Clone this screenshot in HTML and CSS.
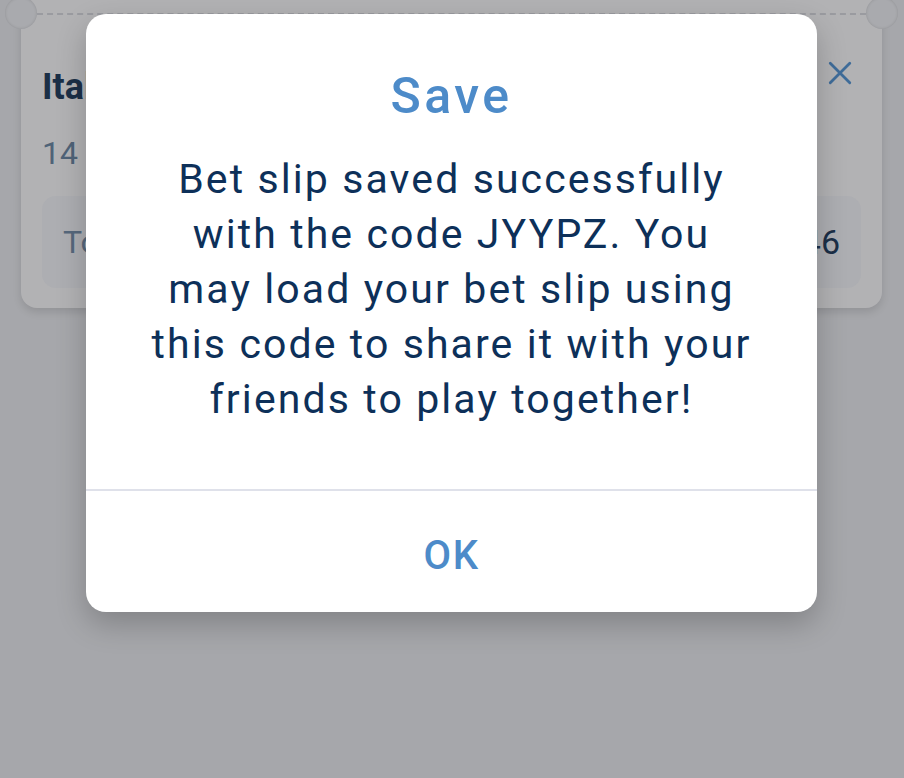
FILE: index.html
```html
<!DOCTYPE html>
<html lang="en">
<head>
<meta charset="utf-8">
<title>Save</title>
<link rel="stylesheet" href="styles.css">
</head>
<body>
<div class="page">
  <div class="ticket">
    <span class="notch notch-left"></span>
    <span class="notch notch-right"></span>
    <div class="ticket-head">
      <div class="match">Italy</div>
      <svg class="close" viewBox="0 0 24 24" width="30" height="30"><path d="M3 3 L21 21 M21 3 L3 21" stroke="currentColor" stroke-width="2.6" fill="none" stroke-linecap="round"/></svg>
    </div>
    <div class="date">14</div>
    <div class="total">
      <span class="total-label">Total</span>
      <span class="total-value">3.46</span>
    </div>
  </div>
</div>

<div class="modal">
  <div class="modal-body">
    <h1 class="modal-title">Save</h1>
    <p class="modal-text">Bet slip saved successfully<br>with the code JYYPZ. You<br>may load your bet slip using<br>this code to share it with your<br>friends to play together!</p>
  </div>
  <div class="modal-footer">
    <button class="ok">OK</button>
  </div>
</div>
</body>
</html>
```

FILE: styles.css
```css
html, body {
  margin: 0;
  height: 100%;
}
body {
  background: #a6a7ab;
  font-family: Roboto, "Noto Sans", sans-serif;
  overflow: hidden;
}
.page {
  padding: 0 22px 0 21px;
}
.ticket {
  position: relative;
  background: #b2b2b4;
  margin-top: -10px;
  border-radius: 0 0 16px 16px;
  box-shadow: 0 4px 8px rgba(0,0,0,0.12);
  padding: 0 21px 20px;
  box-sizing: border-box;
}
.ticket::before {
  content: "";
  position: absolute;
  left: 16px;
  right: 16px;
  top: 23px;
  border-top: 2px dashed #9a9ba0;
}
.notch {
  position: absolute;
  top: 7px;
  width: 32px;
  height: 32px;
  border-radius: 50%;
  background: #a9aaae;
  box-shadow: inset 0 0 3px rgba(0,0,0,0.15);
}
.notch-left { left: -16px; }
.notch-right { right: -16px; }
.ticket-head {
  display: flex;
  justify-content: space-between;
  align-items: flex-start;
  padding-top: 76px;
}
.match {
  font-size: 36px;
  line-height: 42px;
  font-weight: 700;
  color: #1b2f47;
}
.close {
  color: #3f6c99;
  margin-right: 8px;
  margin-top: -6px;
  width: 26px;
  height: 26px;
}
.date {
  margin-top: 26px;
  font-size: 32px;
  line-height: 38px;
  color: #4f6378;
}
.total {
  margin-top: 24px;
  height: 92px;
  border-radius: 14px;
  background: #adaeb2;
  display: flex;
  align-items: center;
  justify-content: space-between;
  padding: 0 21px;
}
.total-label {
  font-size: 32px;
  color: #56687c;
}
.total-value {
  font-size: 34px;
  color: #1b2f47;
}

.modal {
  position: absolute;
  left: 86px;
  top: 14px;
  width: 731px;
  height: 598px;
  background: #fff;
  border-radius: 20px;
  box-shadow: 0 12px 30px rgba(0,0,0,0.22);
  display: flex;
  flex-direction: column;
}
.modal-body {
  flex: 1;
  border-bottom: 2px solid #dfe1ea;
  text-align: center;
}
.modal-title {
  margin: 54px 0 0;
  font-size: 50px;
  line-height: 56px;
  font-weight: 500;
  letter-spacing: 3.5px;
  color: #4d8bc9;
}
.modal-text {
  margin: 28px 0 0;
  font-size: 41px;
  line-height: 55px;
  letter-spacing: 2.1px;
  color: #0d3059;
}
.modal-footer {
  height: 121px;
  box-sizing: border-box;
  padding-top: 8px;
  display: flex;
  align-items: center;
  justify-content: center;
}
.ok {
  border: 0;
  background: none;
  font-family: inherit;
  font-size: 40px;
  font-weight: 500;
  letter-spacing: 1.5px;
  color: #4d8bc9;
  padding: 0;
}
```
